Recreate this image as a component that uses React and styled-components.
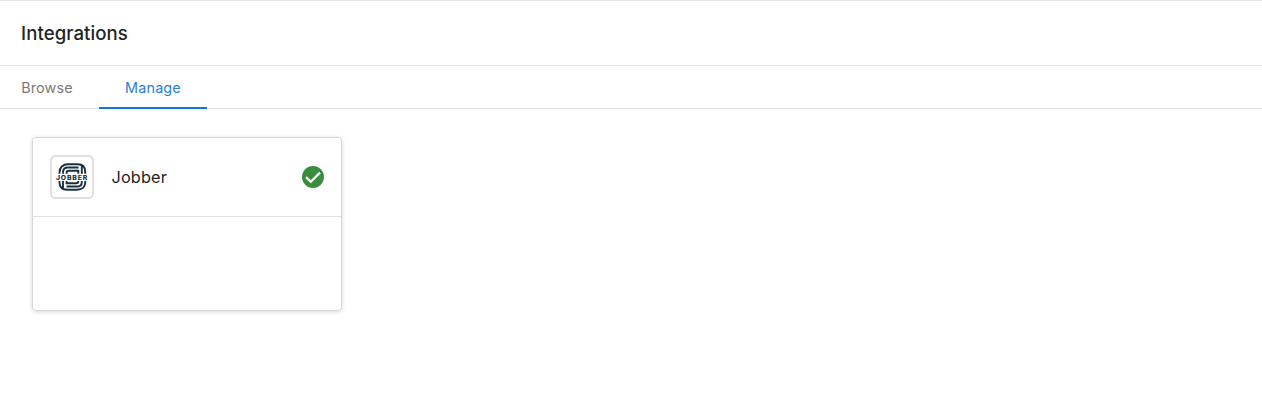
import React from "react";
import styled, { createGlobalStyle } from "styled-components";

const GlobalStyle = createGlobalStyle`
  *, *::before, *::after { box-sizing: border-box; }
  body {
    margin: 0;
    background: #fff;
    color: #242424;
    font-family: Inter, "Liberation Sans", sans-serif;
  }
`;

const Page = styled.div`
  display: flex;
  flex-direction: column;
  height: 413px;
  border-top: 1px solid #e6e6e6;
`;

const Header = styled.header`
  display: flex;
  align-items: center;
  height: 65px;
  padding: 0 21px;
  border-bottom: 1px solid #e6e6e6;
`;

const Title = styled.h1`
  margin: 0;
  font-size: 18.6px;
  line-height: 24px;
  font-weight: 500;
  letter-spacing: 0.08px;
`;

const Tabs = styled.nav`
  display: flex;
  gap: 5px;
  height: 43px;
  border-bottom: 1px solid #e0e0e0;
`;

const Tab = styled.button`
  width: ${(p) => p.$width}px;
  height: 43px;
  padding: 2px 0 0;
  border: 0;
  border-bottom: 2px solid ${(p) => (p.$active ? "#1277dc" : "transparent")};
  background: none;
  color: ${(p) => (p.$active ? "#2b80dc" : "#7b7b7b")};
  font: 400 14.4px/20px Inter, "Liberation Sans", sans-serif;
  letter-spacing: 0.15px;
  text-align: center;
`;

const Content = styled.main`
  padding: 28px 32px;
`;

const Card = styled.article`
  width: 310px;
  height: 174px;
  border: 1px solid #d6d6d6;
  border-radius: 4px;
  box-shadow: 0 1px 4px rgba(0, 0, 0, 0.16);
`;

const CardHeader = styled.div`
  display: flex;
  align-items: center;
  height: 79px;
  padding: 0 17.5px 0 17px;
  border-bottom: 1px solid #e0e0e0;
`;

const LogoTile = styled.div`
  display: flex;
  align-items: center;
  justify-content: center;
  width: 44px;
  height: 44px;
  border: 2px solid #e0e0e0;
  border-radius: 5px;
`;

const Name = styled.span`
  flex: 1;
  margin-left: 17.5px;
  font-size: 16.3px;
  line-height: 24px;
  letter-spacing: 0.15px;
`;

const JobberLogo = () => (
  <svg width="34" height="28" viewBox="0 0 34 28" fill="none" stroke="#17303f" strokeWidth="1.9">
    <path d="M4.5 10.8V9.2C4.5 4.6 8 1.3 13 1.3H22.5C27.5 1.3 30.2 4.3 30.2 8.8V10.8" />
    <path d="M8 10.8V9.3C8 6.3 10 4.5 13 4.5H23.5" />
    <path d="M26.8 3V10.8" />
    <path d="M11.6 10.8V9.5C11.6 8.2 12.3 7.7 13.6 7.7H23.3V10.8" />
    <path d="M4.5 18V19.5C4.5 24 7.5 26.7 12.5 26.7H22C27 26.7 30.2 24 30.2 19.5V18" />
    <path d="M8 18V25" />
    <path d="M26.8 18V19.2C26.8 22 25 23.5 22 23.5H11.5" />
    <path d="M11.6 18V20.3H21.4C22.8 20.3 23.3 19.5 23.3 18" />
    <text
      x="1"
      y="16.6"
      fill="#17303f"
      stroke="none"
      fontFamily="Inter, sans-serif"
      fontSize="5.8"
      fontWeight="800"
      textLength="32"
      lengthAdjust="spacingAndGlyphs"
      letterSpacing="0.7"
    >
      JOBBER
    </text>
  </svg>
);

const ConnectedIcon = () => (
  <svg width="22" height="22" viewBox="0 0 22 22" role="img" aria-label="Connected">
    <circle cx="11" cy="11" r="11" fill="#388e3c" />
    <path d="M4 11.1L8.8 15.8L18 6.6" fill="none" stroke="#fff" strokeWidth="2.2" />
  </svg>
);

export default function App() {
  return (
    <>
      <GlobalStyle />
      <Page>
        <Header>
          <Title>Integrations</Title>
        </Header>
        <Tabs>
          <Tab $width={94}>Browse</Tab>
          <Tab $width={108} $active>
            Manage
          </Tab>
        </Tabs>
        <Content>
          <Card>
            <CardHeader>
              <LogoTile>
                <JobberLogo />
              </LogoTile>
              <Name>Jobber</Name>
              <ConnectedIcon />
            </CardHeader>
          </Card>
        </Content>
      </Page>
    </>
  );
}
